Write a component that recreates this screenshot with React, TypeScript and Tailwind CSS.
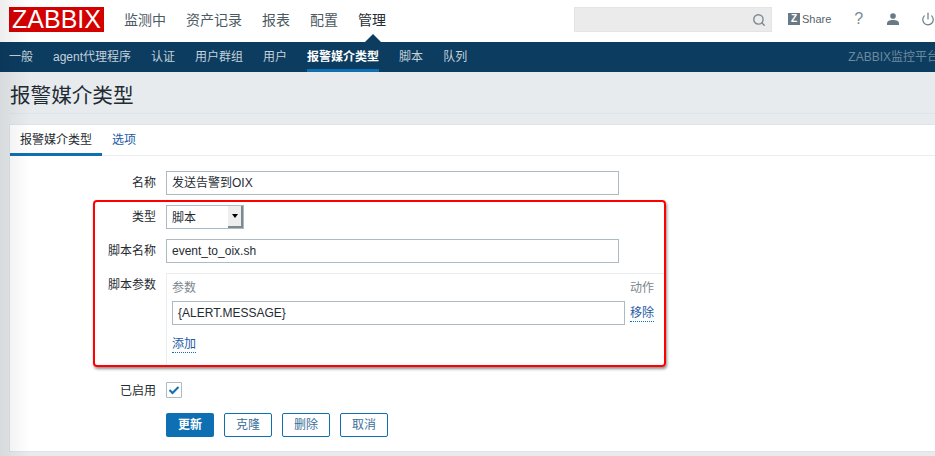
import React from 'react';
import { Search, Power } from 'lucide-react';

const mainMenu = ['监测中', '资产记录', '报表', '配置', '管理'];
const subMenu = ['一般', 'agent代理程序', '认证', '用户群组', '用户', '报警媒介类型', '脚本', '队列'];

const Row = ({ label, className, labelClass, children }: { label: string; className?: string; labelClass?: string; children: React.ReactNode }) => (
    <div className={`flex ${className || ''}`}>
        <div className={`w-[156px] pr-[10px] text-right text-[12px] leading-[16px] text-[#1f2c33] shrink-0 ${labelClass || 'pt-[4px]'}`}>{label}</div>
        <div className="flex-1 min-w-0">{children}</div>
    </div>
);

const TextBox = ({ value, className }: { value: string; className: string }) => (
    <div className={`h-[24px] border border-[#acbbc2] bg-white px-[5px] text-[12px] leading-[22px] text-[#1f2c33] ${className}`}>{value}</div>
);

const DottedLink = ({ children }: { children: React.ReactNode }) => (
    <span className="block h-[17px] border-b border-dotted border-[#0f6fb3] text-[12px] leading-[16px] text-[#1c5aa6]">{children}</span>
);

const OutlineButton = ({ children }: { children: React.ReactNode }) => (
    <button className="h-[24px] w-[48px] rounded-[2px] border border-[#0f6fb3] bg-white text-[12px] text-[#3a6f9c]">{children}</button>
);

export default function App() {
    return (
        <div className="relative h-[456px] w-[935px] overflow-hidden bg-[#e8ebee] font-['Liberation_Sans','Noto_Sans_CJK_SC',sans-serif]">
            {/* top menu */}
            <div className="flex h-[42px] items-start bg-white">
                <div className="ml-[9px] mt-[7px] flex h-[25px] w-[95px] shrink-0 items-center justify-center bg-[#d40000] text-[25px] leading-none text-white">ZABBIX</div>
                <div className="ml-[20px] flex shrink-0 gap-[20px] whitespace-nowrap pt-[12px]">
                    {mainMenu.map((m) => (
                        <div key={m} className={`relative text-[14px] leading-[16px] ${m === '管理' ? 'text-[#1f2c33]' : 'text-[#4c5a62]'}`}>
                            {m}
                            {m === '管理' && (
                                <div className="absolute left-[7px] top-[22px] h-0 w-0 border-x-[8px] border-b-[8px] border-x-transparent border-b-[#0c3c60]" />
                            )}
                        </div>
                    ))}
                </div>
                <div className="ml-[188px] mt-[7px] flex h-[25px] w-[198px] shrink-0 items-center justify-end border border-[#e2e4e5] bg-[#ebebeb] pr-[5px]">
                    <Search size={14} strokeWidth={2.4} className="text-[#7b8a92]" />
                </div>
                <div className="ml-[16px] mt-[12px] flex shrink-0 items-center gap-[2px] text-[11px] leading-[14px] text-[#55646c]">
                    <span className="flex h-[12px] w-[12px] items-center justify-center bg-[#687a85] text-[10px] font-bold leading-none text-white">Z</span>
                    Share
                </div>
                <div className="ml-[23px] mt-[10px] shrink-0 text-[16px] leading-[18px] text-[#7b8a92]">?</div>
                <svg className="ml-[24px] mt-[13px] shrink-0" width="12" height="12" viewBox="0 0 14 14">
                    <circle cx="7" cy="3.5" r="3.3" fill="#687a85" />
                    <path d="M0 14v-2c0-2.4 3-3.8 7-3.8s7 1.4 7 3.8v2z" fill="#687a85" />
                </svg>
                <Power size={14} strokeWidth={2} className="ml-[22px] mt-[12px] shrink-0 text-[#687a85]" />
            </div>

            {/* sub menu */}
            <div className="flex h-[30px] items-stretch bg-[#0c3c60] pl-[9px] text-[12px]">
                <div className="flex gap-[20px] whitespace-nowrap">
                    {subMenu.map((m) =>
                        m === '报警媒介类型' ? (
                            <div key={m} className="border-b-[3px] border-[#0f6fb3] pt-[7px] font-bold leading-[16px] text-white">{m}</div>
                        ) : (
                            <div key={m} className="pt-[7px] leading-[16px] text-[#c4d2da]">{m}</div>
                        )
                    )}
                </div>
                <div className="ml-auto mr-[-4px] whitespace-nowrap pt-[7px] leading-[16px] text-[#6d8a9c]">ZABBIX监控平台</div>
            </div>

            {/* page title */}
            <div className="ml-[10px] flex h-[42px] items-center border-b border-[#dfe4e7] pt-[8px] text-[20.6px] leading-none text-[#1f2c33]">报警媒介类型</div>

            {/* card */}
            <div className="ml-[9px] mt-[10px] h-[328px] border border-r-0 border-[#dfe4e7] bg-white">
                <div className="flex h-[31px] border-b border-[#ebeef0] text-[12px] leading-[16px]">
                    <div className="h-[31px] w-[92px] border-b-[3px] border-[#0f6fb3] pt-[7px] text-center text-[#1f2c33]">报警媒介类型</div>
                    <div className="ml-[10px] pt-[7px] text-[#1c5aa6]">选项</div>
                </div>

                <div className="pt-[15px]">
                    <Row label="名称">
                        <TextBox value="发送告警到OIX" className="w-[453px]" />
                    </Row>
                    <Row label="类型" className="mt-[10px]">
                        <div className="flex h-[24px] w-[78px] border border-[#acbbc2] bg-white">
                            <span className="flex-1 pl-[5px] pt-[1px] text-[12px] leading-[23px] text-[#1f2c33]">脚本</span>
                            <span className="flex w-[15px] items-center justify-center border-r-2 border-b-2 border-[#7f8a8f] bg-[#eeeeee]">
                                <span className="h-0 w-0 border-x-[3px] border-t-[4px] border-x-transparent border-t-black" />
                            </span>
                        </div>
                    </Row>
                    <Row label="脚本名称" className="mt-[10px]">
                        <TextBox value="event_to_oix.sh" className="w-[453px]" />
                    </Row>
                    <Row label="脚本参数" className="mt-[10px]">
                        <div className="h-[93px] w-[498px] border-l border-t border-[#ebeef0] pl-[5px]">
                            <div className="flex h-[27px] w-[482px] justify-between pt-[6px] text-[12px] leading-[16px] text-[#7a868d]">
                                <span>参数</span>
                                <span>动作</span>
                            </div>
                            <div className="flex w-[482px] justify-between">
                                <TextBox value="{ALERT.MESSAGE}" className="w-[453px]" />
                                <div className="pt-[4px]">
                                    <DottedLink>移除</DottedLink>
                                </div>
                            </div>
                            <div className="mt-[11px] flex">
                                <DottedLink>添加</DottedLink>
                            </div>
                        </div>
                    </Row>
                    <Row label="已启用" className="mt-[15px]" labelClass="pt-[2px]">
                        <div className="mt-[1px] flex h-[16px] w-[16px] items-center justify-center rounded-[1px] border border-[#acbbc2]">
                            <svg width="12" height="10" viewBox="0 0 12 10">
                                <path d="M1.5 5l3 3 6-6" fill="none" stroke="#0f6fb3" strokeWidth="2" />
                            </svg>
                        </div>
                    </Row>
                    <div className="ml-[156px] mt-[14px] flex gap-[10px]">
                        <button className="h-[24px] w-[48px] rounded-[2px] bg-[#0f6fb3] text-[12px] font-bold text-white">更新</button>
                        <OutlineButton>克隆</OutlineButton>
                        <OutlineButton>删除</OutlineButton>
                        <OutlineButton>取消</OutlineButton>
                    </div>
                </div>
            </div>

            {/* window shadow on the left edge */}
            <div className="pointer-events-none absolute inset-y-0 left-0 w-[30px] bg-gradient-to-r from-black/[0.07] to-transparent" />

            {/* red annotation */}
            <div className="pointer-events-none absolute left-[93px] top-[200px] h-[167px] w-[573px] rounded-[4px] border-[2px] border-[#fe0000] shadow-[1px_2px_3px_rgba(0,0,0,0.45)]" />
        </div>
    );
}
